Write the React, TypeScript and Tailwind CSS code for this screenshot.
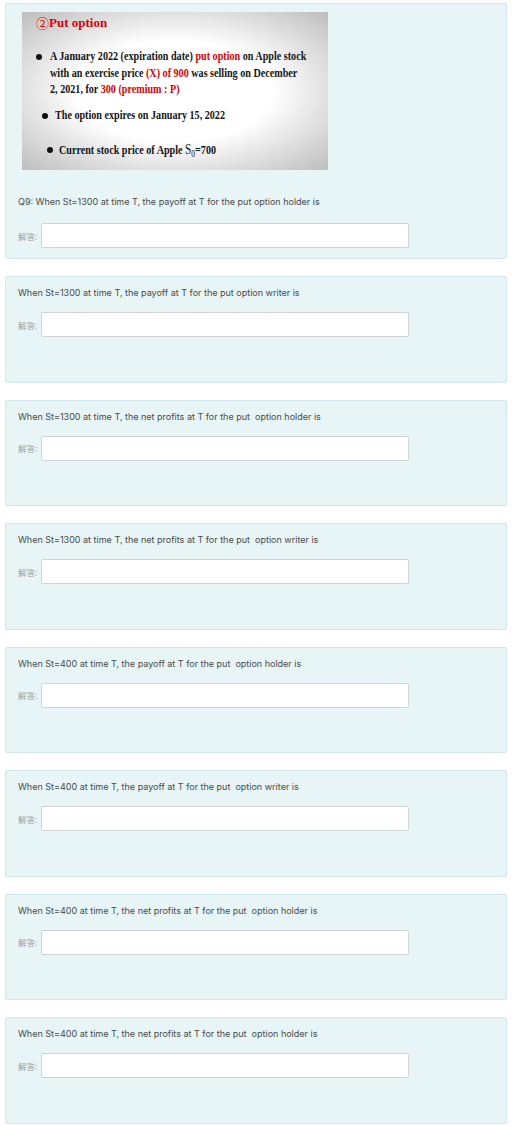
import React from "react";

const questions = [
  "When St=1300 at time T, the payoff at T for the put option writer is",
  "When St=1300 at time T, the net profits at T for the put\u00a0 option holder is",
  "When St=1300 at time T, the net profits at T for the put\u00a0 option writer is",
  "When St=400 at time T, the payoff at T for the put\u00a0 option holder is",
  "When St=400 at time T, the payoff at T for the put\u00a0 option writer is",
  "When St=400 at time T, the net profits at T for the put\u00a0 option holder is",
  "When St=400 at time T, the net profits at T for the put\u00a0 option holder is",
];

function AnswerRow({ mt }: { mt: string }) {
  return (
    <div className={`flex items-center ${mt}`}>
      <span
        className="w-[23px] text-[8.5px] leading-[12px] text-[#a0a0a0]"
        style={{ fontFamily: '"Noto Sans CJK SC", "Noto Sans", sans-serif' }}
      >
        解答:
      </span>
      <div className="h-[25px] w-[368px] rounded-[2px] border border-[#cfd4d6] bg-white" />
    </div>
  );
}

const serif = { fontFamily: '"Liberation Serif", "Times New Roman", serif' };

function Line({ children, className = "" }: { children: React.ReactNode; className?: string }) {
  return (
    <div className={`h-[16.5px] whitespace-nowrap text-[13.5px] leading-[16.5px] ${className}`}>
      <span className="inline-block origin-left scale-x-[0.75]">{children}</span>
    </div>
  );
}

function Dot() {
  return <span className="mt-[5.5px] h-[6px] w-[6px] shrink-0 rounded-full bg-[#111]" />;
}

function Slide() {
  return (
    <div
      className="ml-[4px] h-[158px] w-[306px] bg-[radial-gradient(ellipse_at_center,#ffffff_45%,#bdbdbd_100%)] pl-[14px] pt-[3px] font-bold text-[#151515]"
      style={serif}
    >
      <div className="flex items-center text-[13px] leading-[16px] text-[#e00000]">
        <span
          className="font-normal text-[13px]"
          style={{ fontFamily: '"Noto Sans CJK SC", sans-serif' }}
        >
          ②
        </span>
        <span>Put option</span>
      </div>
      <div className="mt-[17px] flex gap-[8px]">
        <Dot />
        <div>
          <Line>
            A January 2022 (expiration date) <span className="text-[#e00000]">put option</span> on Apple stock
          </Line>
          <Line>
            with an exercise price <span className="text-[#e00000]">(X) of 900</span> was selling on December
          </Line>
          <Line>
            2, 2021, for <span className="text-[#e00000]">300 (premium : P)</span>
          </Line>
        </div>
      </div>
      <div className="mt-[9.5px] flex gap-[7px] pl-[6px]">
        <Dot />
        <Line>The option expires on January 15, 2022</Line>
      </div>
      <div className="mt-[17.5px] flex gap-[6px] pl-[11px]">
        <Dot />
        <Line>
          Current stock price of Apple{" "}
          <span className="font-normal text-[15px]">
            S<sub className="text-[10px]">0</sub>
          </span>
          =700
        </Line>
      </div>
    </div>
  );
}

function QText({ children }: { children: React.ReactNode }) {
  return (
    <div
      className="text-[9px] leading-[12px] text-[#4a4a4a]"
      style={{ fontFamily: 'Inter, "Noto Sans", sans-serif' }}
    >
      {children}
    </div>
  );
}

export default function App() {
  return (
    <div className="flex min-h-[1126px] w-[512px] flex-col gap-[17px] bg-white px-[5px] pt-[3px]">
      <div className="rounded-[2px] border border-[#cfe6ec] bg-[#e7f5f7] px-[12px] pb-[10px] pt-[8px]">
        <Slide />
        <div className="mt-[26px]">
          <QText>Q9: When St=1300 at time T, the payoff at T for the put option holder is</QText>
        </div>
        <AnswerRow mt="mt-[15px]" />
      </div>
      {questions.map((q, i) => (
        <div
          key={i}
          className="h-[106.5px] rounded-[2px] border border-[#cfe6ec] bg-[#e7f5f7] px-[12px] pt-[10px]"
        >
          <QText>{q}</QText>
          <AnswerRow mt="mt-[13px]" />
        </div>
      ))}
    </div>
  );
}
